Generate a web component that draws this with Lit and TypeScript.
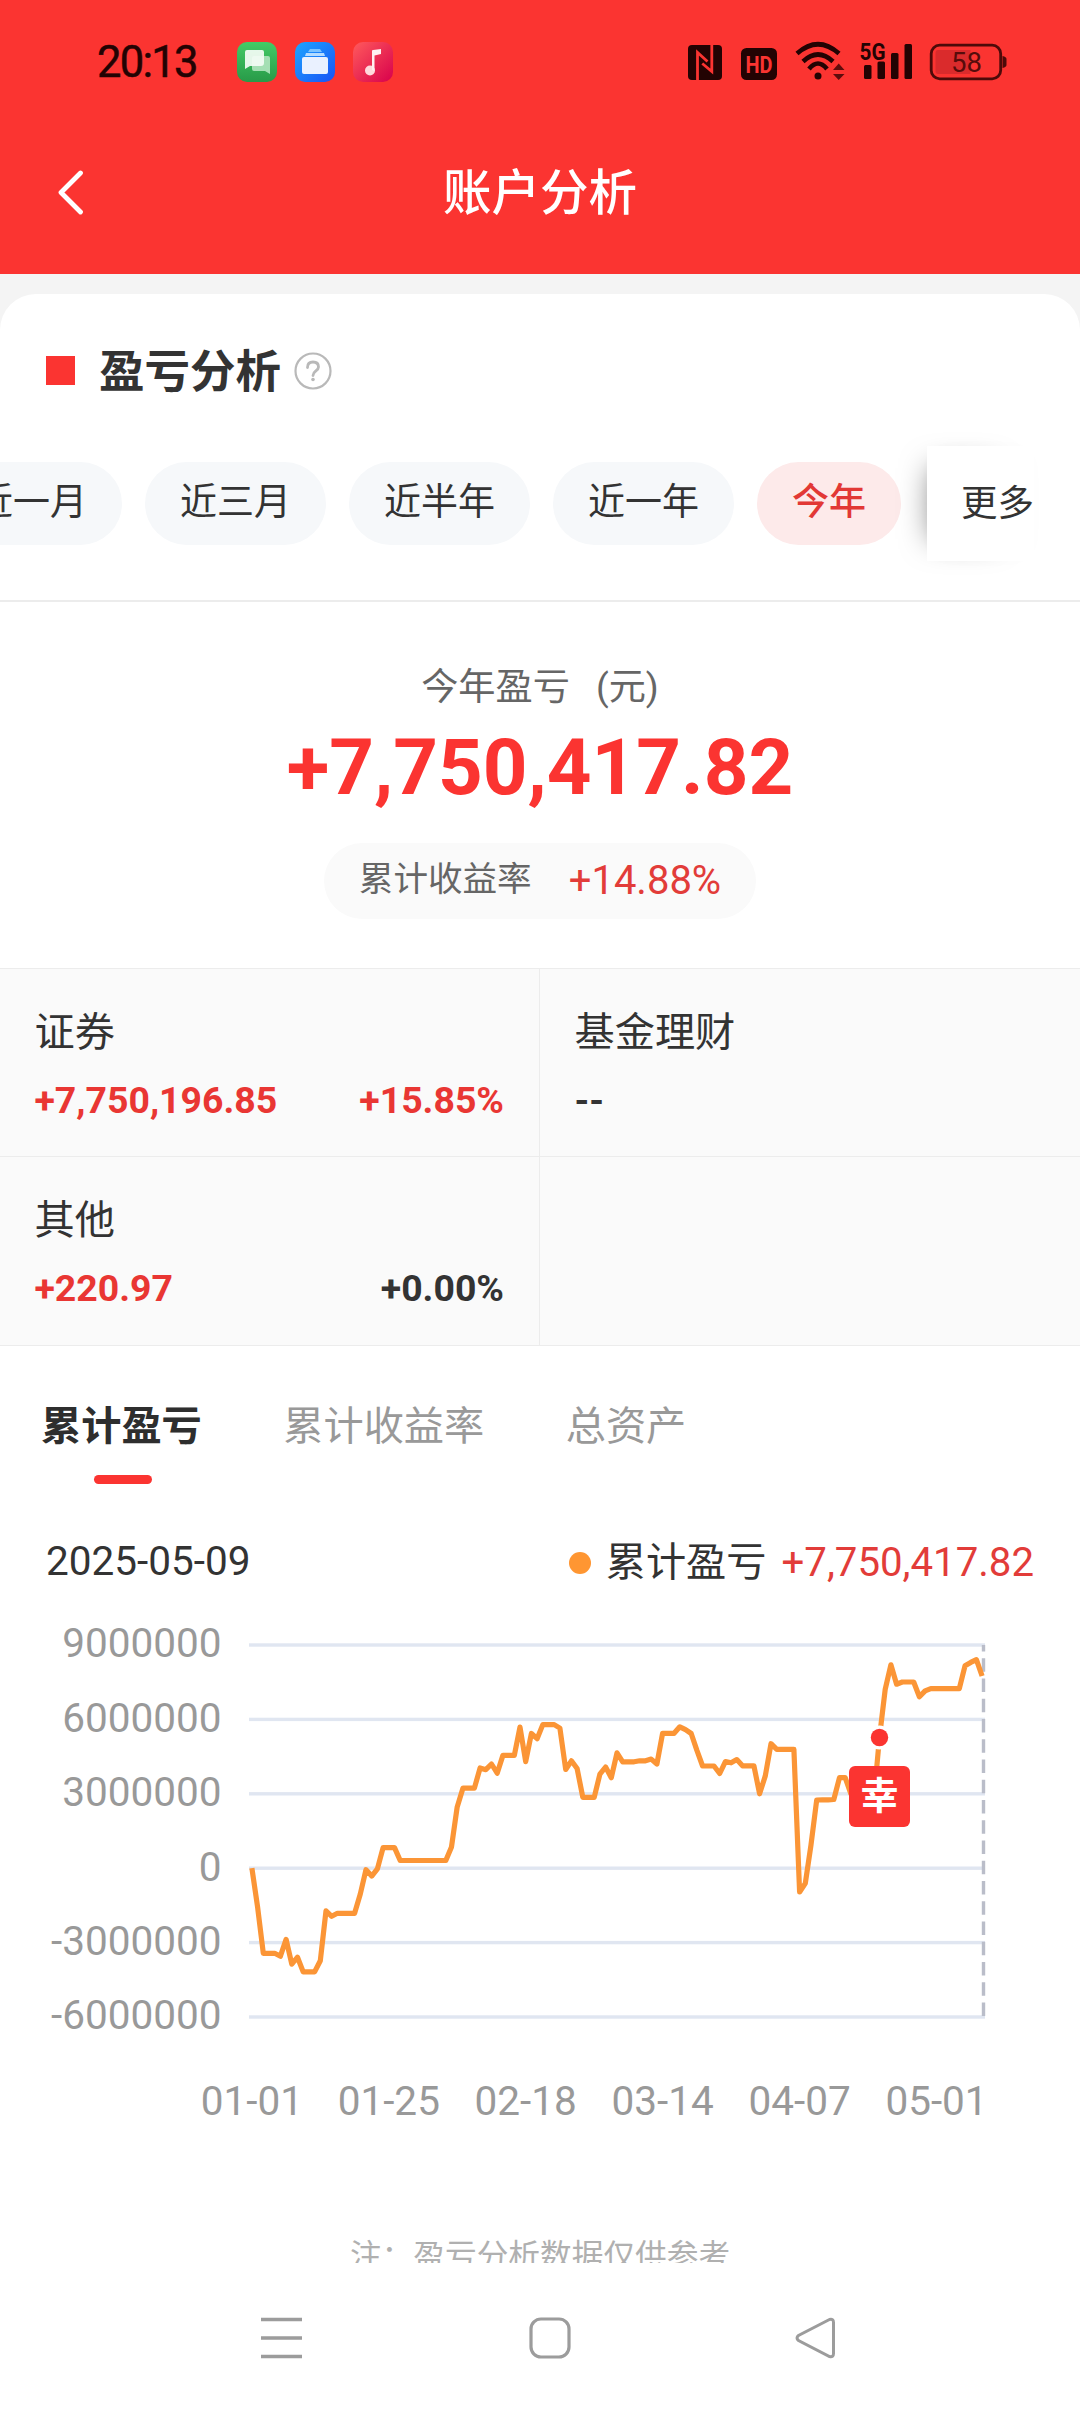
import { LitElement, html, css, svg } from "lit";
import { customElement } from "lit/decorators.js";
import { classMap } from "lit/directives/class-map.js";

const FONT = css`Roboto, "Noto Sans CJK SC", sans-serif`;

/** Daily cumulative profit, in units of 10,000 yuan, from 01-01 to 05-09. */
const SERIES: number[] = [
  0, -157, -343, -343, -343, -355, -287, -387, -359, -418, -418, -418, -373, -172, -194, -182, -182,
  -182, -182, -104, -6, -32, -3, 83, 83, 83, 31, 31, 31, 31, 31, 31, 31, 31, 31, 86, 247, 323, 323,
  323, 404, 397, 420, 383, 455, 455, 455, 569, 430, 543, 522, 579, 579, 579, 565, 398, 433, 402, 286,
  286, 286, 379, 408, 365, 465, 429, 429, 429, 433, 433, 440, 420, 544, 544, 544, 570, 559, 543, 475,
  412, 412, 412, 382, 430, 425, 438, 413, 413, 413, 300, 372, 502, 479, 479, 479, 479, -96, -61, 94,
  275, 276, 276, 277, 365, 365, 300, 260, 250, 245, 270, 525, 721, 820, 742, 751, 751, 751, 691, 715,
  724, 724, 724, 724, 724, 724, 816, 830, 841, 775,
];

const TICKS = [9000000, 6000000, 3000000, 0, -3000000, -6000000];
const DATES = ["01-01", "01-25", "02-18", "03-14", "04-07", "05-01"];

@customElement("status-bar")
class StatusBar extends LitElement {
  static styles = css`
    :host { display: flex; align-items: center; height: 124px; box-sizing: border-box; padding: 0 73px 0 97px; color: #230303; font-family: ${FONT}; }
    .time { width: 140px; font-size: 43.500px; font-weight: 400; letter-spacing: -1.7px; line-height: 50px; padding-top: 2px; -webkit-text-stroke: .5px #230303; }
    .apps { display: flex; gap: 18px; flex: 1; }
    svg { display: block; flex: none; overflow: visible; }
    .badge-text { font-family: Roboto, sans-serif; font-weight: 700; }
  `;
  render() {
    return html`
      <div class="time">20:13</div>
      <div class="apps">
        <svg width="40" height="40" viewBox="0 0 40 40">
          <defs><linearGradient id="g" x1="0" y1="0" x2="0" y2="1"><stop offset="0" stop-color="#43cb66" /><stop offset="1" stop-color="#289a48" /></linearGradient></defs>
          <rect width="40" height="40" rx="10" fill="url(#g)" />
          <path d="M17 14h14a2 2 0 0 1 2 2v16l-5-3H17a2 2 0 0 1-2-2V16a2 2 0 0 1 2-2z" fill="#a5dfb4" />
          <path d="M10 8h15a2 2 0 0 1 2 2v11a3 3 0 0 1-3 3H13l-5 3V10a2 2 0 0 1 2-2z" fill="#f3fcf5" opacity=".93" />
        </svg>
        <svg width="40" height="40" viewBox="0 0 40 40">
          <defs><linearGradient id="b" x1="0" y1="0" x2="1" y2="1"><stop offset="0" stop-color="#1da5ff" /><stop offset="1" stop-color="#1a52f5" /></linearGradient></defs>
          <rect width="40" height="40" rx="10" fill="url(#b)" />
          <path d="M15 7h10l2 3H13z" fill="#7cc3ff" />
          <path d="M11 11h18l1 3H10z" fill="#b4dbff" />
          <rect x="7" y="15" width="26" height="17" rx="2" fill="#eaf1ff" />
        </svg>
        <svg width="40" height="40" viewBox="0 0 40 40">
          <defs><linearGradient id="r" x1="0" y1="0" x2="1" y2="1"><stop offset="0" stop-color="#ff5a5c" /><stop offset="1" stop-color="#d8004c" /></linearGradient></defs>
          <rect width="40" height="40" rx="10" fill="url(#r)" />
          <circle cx="17" cy="28.500" r="5" fill="#ffd9dc" />
          <path d="M19 28V9q0-1 1-1l8-1v5l-6.500 1.500V29z" fill="#fff0f1" />
        </svg>
      </div>
      <svg width="320" height="42" viewBox="687 41 320 42" fill="#230303">
        <rect x="688" y="45" width="34" height="35" rx="4" />
        <path d="M697.500 80.500V52.500L707.500 61.500M711.800 44.500V71.500L702.300 63.500" fill="none" stroke="#fb3431" stroke-width="2.800" />
        <rect x="741" y="48" width="36" height="32" rx="5.500" />
        <text class="badge-text" x="745.500" y="72.500" font-size="24.500" textLength="27" lengthAdjust="spacingAndGlyphs" fill="#fb3431">HD</text>
        <g fill="none" stroke="#230303" stroke-width="4.600">
          <path d="M797 53.500Q818 35 839 53.500" />
          <path d="M803 61.500Q818 47.500 833 61.500" />
          <path d="M809 69Q818 58 827 69" />
        </g>
        <circle cx="818" cy="76" r="3.500" />
        <path d="M833 70l5.700-6.500 5.800 6.500zM833 74h11.500l-5.800 6z" fill="#5d0d0c" />
        <text class="badge-text" x="859.500" y="60" font-size="24.500" textLength="26" lengthAdjust="spacingAndGlyphs">5G</text>
        <rect x="864" y="65" width="7.500" height="14" rx="1.500" /><rect x="877.500" y="61.500" width="7.500" height="17.500" rx="1.500" />
        <rect x="891" y="53" width="7.500" height="26" rx="1.500" /><rect x="904.500" y="44" width="7.500" height="35" rx="1.500" />
        <rect x="931.200" y="45.200" width="69.500" height="33.600" rx="8.500" fill="none" stroke="#4d0a09" stroke-width="2.800" />
        <path d="M1002.500 56q4 1 4 3v6q0 2-4 3z" fill="#4d0a09" />
        <path d="M938 50h32.500v24H938q-2.500 0-2.500-3V53q0-3 2.500-3z" fill="#da2b2c" />
        <text x="966.500" y="72" font-family="Roboto, sans-serif" font-size="27.500" text-anchor="middle" fill="#560c0b">58</text>
      </svg>
    `;
  }
}

@customElement("profit-chart")
class ProfitChart extends LitElement {
  static styles = css`
    :host { display: block; }
    svg { display: block; }
    .axis { font: 400 40.500px Roboto, sans-serif; fill: #999; }
    .mark { font: 700 38px "Noto Sans CJK SC", sans-serif; fill: #fff; }
  `;
  render() {
    const left = 249, right = 985, top = 35, step = 74.4;
    const band = (right - left) / SERIES.length;
    const x = (i: number) => left + band * (i + 0.5);
    const y = (v: number) => top + step * (3 - v / 300);
    const points = SERIES.map((v, i) => `${x(i).toFixed(1)},${y(v).toFixed(1)}`).join(" ");
    const end = right - 1.5;
    return html`<svg width="1080" height="530" viewBox="0 0 1080 530">
      ${TICKS.map((t, i) => svg`
        <rect x=${left} y=${top + step * i - 1.7} width=${right - left} height="3.400" fill="#e0e6f1" />
        <text class="axis" x="221.500" y=${top + step * i + 12.3} text-anchor="end">${t}</text>`)}
      ${DATES.map((d, i) => svg`<text class="axis" x=${x(i * 24)} y="504.500" text-anchor="middle">${d}</text>`)}
      <path d="M${end} ${top + step * 5 - 1}V${top}" stroke="#babdc9" stroke-width="3.400" stroke-dasharray="13.500 6.750" fill="none" />
      <polyline points=${points} fill="none" stroke="#fb9536" stroke-width="5.200" stroke-linejoin="round" />
      <circle cx="879.500" cy="127.500" r="12" fill="#fff" />
      <circle cx="879.500" cy="127.500" r="8.700" fill="#fb3431" />
      <rect x="849" y="156" width="61" height="61" rx="6" fill="#fb3431" />
      <text class="mark" x="879.500" y="198.500" text-anchor="middle">幸</text>
    </svg>`;
  }
}

@customElement("app-root")
class AppRoot extends LitElement {
  static styles = css`
    :host { display: flex; flex-direction: column; width: 1080px; height: 2412px; overflow: hidden; background: #f4f4f4; color: #333; font-family: ${FONT}; }
    * { box-sizing: border-box; }
    svg { display: block; }
    .head { background: #fb3431; height: 274px; flex: none; }
    .nav { display: grid; grid-template-columns: 140px 1fr 140px; align-items: center; height: 136px; color: #fff; }
    .back { margin-left: 56px; }
    .nav-title { text-align: center; font-size: 48.500px; font-weight: 500; line-height: 60px; padding-top: 3px; }
    .card { margin-top: 20px; flex: 1; min-height: 0; overflow: hidden; background: #fff; border-radius: 36px 36px 0 0; }
    .section { display: flex; align-items: center; height: 153px; padding: 0 46px; }
    .square { width: 29px; height: 29px; background: #fb3431; margin-right: 24px; }
    .section-title { font-size: 45.500px; font-weight: 700; line-height: 60px; margin-right: 13px; padding-top: 4px; }
    .ranges { display: flex; align-items: center; height: 155px; padding: 0 46px 40px 0; border-bottom: 2px solid #ececec; }
    .scroller { display: flex; justify-content: flex-end; gap: 23px; width: 927px; padding-right: 26px; overflow: hidden; }
    .chip { flex: none; height: 83px; border-radius: 42px; padding: 0 35px; background: #f6f8fa; font-size: 37px; line-height: 82px; white-space: nowrap; }
    .on { background: #fdeaea; color: #e23835; font-weight: 500; }
    .more { flex: none; width: 107px; height: 115px; background: #fff; font-size: 36.500px; line-height: 115px; padding-left: 34px; white-space: nowrap; box-shadow: -18px 0 30px -22px rgba(0,0,0,.5), 0 0 24px -6px rgba(0,0,0,.02); }
    .summary { display: flex; flex-direction: column; align-items: center; height: 366px; padding-top: 57px; }
    .caption { display: flex; gap: 26px; font-size: 37.200px; line-height: 56px; color: #666; }
    .total { font-size: 78px; font-weight: 700; line-height: 92px; margin-top: 7px; color: #fb3431; }
    .rate { display: flex; align-items: center; gap: 37px; height: 76px; margin-top: 29px; padding: 0 35px; border-radius: 38px; background: #fafafa; color: #666; font-size: 34.600px; line-height: 50px; }
    .rate span:first-child { padding-bottom: 4px; }
    .rate .rate-value { font-size: 40px; color: #e23c39; padding-bottom: 1px; }
    .grid { display: grid; grid-template-columns: 540px 540px; grid-template-rows: 188px 189px; border-top: 1px solid #ececec; background: #fafafa; }
    .cell { padding: 36px 35px 0 34.500px; border-bottom: 1px solid #ececec; }
    .cell:nth-child(odd) { border-right: 1px solid #ececec; }
    .name { font-size: 40.200px; line-height: 56px; }
    .figures { display: flex; justify-content: space-between; margin-top: 14px; font-size: 37.400px; font-weight: 700; line-height: 50px; }
    .red { color: #e93633; }
    .tabs { display: flex; gap: 81.500px; padding: 53px 41px 0; font-size: 40.200px; line-height: 56px; color: #999; }
    .tab { display: flex; flex-direction: column; align-items: center; height: 89px; }
    .active { color: #2e2e2e; font-weight: 700; }
    .bar { width: 58px; height: 9px; border-radius: 4.500px; background: #fb3431; margin: 20px 0 0 4px; }
    .legend { display: flex; align-items: center; height: 56px; margin: 47px 46px 0; font-size: 40.200px; line-height: 50px; }
    .date { flex: 1; padding-bottom: 5px; font-size: 40.500px; }
    .dot { width: 22px; height: 22px; border-radius: 50%; background: #ff9632; margin-right: 15px; }
    .legend-value { color: #e23c39; margin-left: 15px; }
    .chart { margin-top: 19px; }
    .note { margin-top: 94px; text-align: center; font-size: 31.700px; line-height: 46px; color: #b0b0b0; }
    .keys { flex: none; height: 149px; background: #fff; display: flex; align-items: center; justify-content: space-between; padding: 0 243px 0 260px; }
    .home { margin-left: 2px; }
  `;

  private chips = ["近一月", "近三月", "近半年", "近一年", "今年"];
  private accounts = [
    { name: "证券", value: "+7,750,196.85", rate: "+15.85%" },
    { name: "基金理财", value: "--", rate: "" },
    { name: "其他", value: "+220.97", rate: "+0.00%" },
  ];
  private tabs = ["累计盈亏", "累计收益率", "总资产"];

  render() {
    return html`
      <header class="head">
        <status-bar></status-bar>
        <div class="nav">
          <svg class="back" width="30" height="46" viewBox="0 0 30 46" fill="none" stroke="#fff" stroke-width="4.800" stroke-linecap="round" stroke-linejoin="round"><path d="M24.500 4L5 23.500 24.500 43" /></svg>
          <div class="nav-title">账户分析</div>
        </div>
      </header>
      <main class="card">
        <div class="section">
          <span class="square"></span>
          <span class="section-title">盈亏分析</span>
          <svg width="38" height="38" viewBox="0 0 38 38" fill="none" stroke="#b9b9b9" stroke-width="2.200"><circle cx="19" cy="19" r="17.500" /><path d="M13.500 15.500q0-5.500 5.500-5.500t5.500 5c0 4-5.500 4-5.500 8.500" stroke-width="2.800" stroke-linecap="round" /><circle cx="19" cy="27.500" r="1.800" fill="#b9b9b9" stroke="none" /></svg>
        </div>
        <div class="ranges">
          <div class="scroller">
            ${this.chips.map((c) => html`<span class=${classMap({ chip: true, on: c === "今年" })}>${c}</span>`)}
          </div>
          <div class="more">更多</div>
        </div>
        <section class="summary">
          <div class="caption"><span>今年盈亏</span><span>(元)</span></div>
          <div class="total">+7,750,417.82</div>
          <div class="rate"><span>累计收益率</span><span class="rate-value">+14.88%</span></div>
        </section>
        <section class="grid">
          ${this.accounts.map((a) => html`
            <div class="cell">
              <div class="name">${a.name}</div>
              <div class="figures">
                <span class=${classMap({ red: a.value.startsWith("+") })}>${a.value}</span>
                <span class=${classMap({ red: a.rate.startsWith("+") && parseFloat(a.rate) > 0 })}>${a.rate}</span>
              </div>
            </div>`)}
          <div class="cell"></div>
        </section>
        <nav class="tabs">
          ${this.tabs.map((t, i) => html`<div class=${classMap({ tab: true, active: i === 0 })}><span>${t}</span>${i === 0 ? html`<i class="bar"></i>` : ""}</div>`)}
        </nav>
        <div class="legend">
          <span class="date">2025-05-09</span><i class="dot"></i><span>累计盈亏</span><span class="legend-value">+7,750,417.82</span>
        </div>
        <profit-chart class="chart"></profit-chart>
        <div class="note">注：盈亏分析数据仅供参考</div>
      </main>
      <footer class="keys">
        <svg width="42" height="42" viewBox="0 0 42 42" stroke="#9c9c9c" stroke-width="3.400"><path d="M1 2.500h41M1 21h41M1 39.500h41" /></svg>
        <svg class="home" width="42" height="42" viewBox="0 0 42 42" fill="none" stroke="#9c9c9c" stroke-width="3.200"><rect x="2" y="2" width="38" height="38" rx="10" /></svg>
        <svg width="42" height="42" viewBox="0 0 42 42" fill="none" stroke="#9c9c9c" stroke-width="3"><path d="M34.500 2.500L3.500 18.500q-3 2.500 0 5L34.500 39.500q4 1 4-3V5.500q0-4-4-3z" /></svg>
      </footer>
    `;
  }
}
